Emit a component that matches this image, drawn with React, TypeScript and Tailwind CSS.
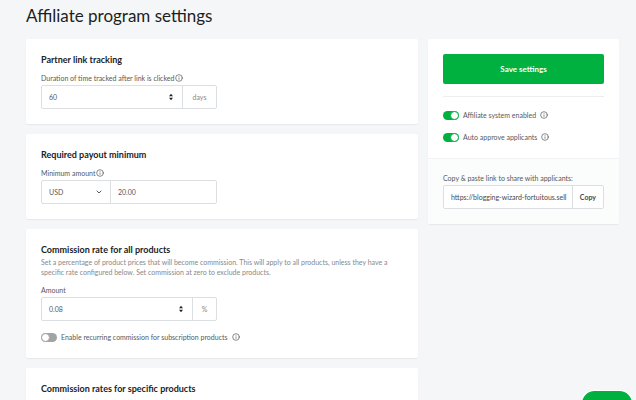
import { useState } from 'react';
import type { ReactNode } from 'react';
import { ChevronDown, Info } from 'lucide-react';

const InfoIcon = () => <Info className="size-2 shrink-0 text-[#4b4f53]" strokeWidth={2} />;

const Card: React.FC<{ title: string; children?: ReactNode }> = ({ title, children }) => (
  <section className="rounded-xs bg-white px-[15px] pt-3.5 pb-[15px] shadow-[0_1px_1px_#e6e9ec]">
    <h2 className="text-[9px] leading-3.5 font-bold text-[#202225]">{title}</h2>
    {children}
  </section>
);

const Toggle: React.FC<{
  id: string;
  label: string;
  checked: boolean;
  onChange: (checked: boolean) => void;
}> = ({ id, label, checked, onChange }) => (
  <div className="flex h-3 items-center">
    <input
      type="checkbox"
      id={id}
      checked={checked}
      onChange={(e) => onChange(e.target.checked)}
      className="relative h-[9px] w-4 shrink-0 cursor-pointer appearance-none rounded-full bg-[#a3a3a3] before:absolute before:top-0 before:left-0 before:size-[9px] before:rounded-full before:border before:border-[#a3a3a3] before:bg-white checked:bg-[#00b140] checked:before:left-[7px] checked:before:border-[#00b140]"
    />
    <label htmlFor={id} className="mr-1 ml-1 text-[7px] leading-3 text-[#55595d]">
      {label}
    </label>
    <InfoIcon />
  </div>
);

const NumberField: React.FC<{
  id: string;
  value: string;
  onChange: (value: string) => void;
  unit: string;
  unitClass: string;
}> = ({ id, value, onChange, unit, unitClass }) => (
  <div className="mt-0.5 flex h-6 w-44 rounded-xs border border-[#dcdfe1] bg-white">
    <div className="relative flex min-w-0 flex-1">
      <input
        type="number"
        id={id}
        value={value}
        onChange={(e) => onChange(e.target.value)}
        className="w-full [appearance:textfield] px-[7px] text-[7px] text-[#55595d] outline-none [&::-webkit-inner-spin-button]:appearance-none"
      />
      <svg
        viewBox="0 0 6 8"
        className="pointer-events-none absolute top-[7px] right-2 h-2 w-1.5"
        fill="#222"
      >
        <path d="M3 .8 5 3.2H1zM3 7.2 1 4.8h4z" />
      </svg>
    </div>
    <span
      className={`flex items-center justify-center border-l border-[#dcdfe1] text-[7px] text-[#85898d] ${unitClass}`}
    >
      {unit}
    </span>
  </div>
);

const App: React.FC = () => {
  const [duration, setDuration] = useState('60');
  const [currency, setCurrency] = useState('USD');
  const [minimum, setMinimum] = useState('20.00');
  const [rate, setRate] = useState('0.08');
  const [recurring, setRecurring] = useState(false);
  const [enabled, setEnabled] = useState(true);
  const [autoApprove, setAutoApprove] = useState(true);
  const shareLink = 'https://blogging-wizard-fortuitous.sell';

  return (
    <div className="h-screen overflow-y-auto bg-[#f5f6f8] pr-[17px] pl-[26px] font-['Lato','Liberation_Sans',sans-serif] [scrollbar-width:none]">
      <h1 className="pt-1 pb-[11px] text-[17px] leading-6 text-[#1d1f21]">Affiliate program settings</h1>
      <div className="flex items-start gap-2.5">
        <main className="flex min-w-0 flex-1 flex-col gap-2.5">
          <Card title="Partner link tracking">
            <div className="mt-1.5 flex items-center gap-px">
              <label htmlFor="duration" className="text-[7px] leading-2.5 text-[#55595d]">
                Duration of time tracked after link is clicked
              </label>
              <InfoIcon />
            </div>
            <NumberField id="duration" value={duration} onChange={setDuration} unit="days" unitClass="w-[34px]" />
          </Card>

          <Card title="Required payout minimum">
            <div className="mt-1.5 flex items-center gap-px">
              <label htmlFor="minimum" className="text-[7px] leading-2.5 text-[#55595d]">
                Minimum amount
              </label>
              <InfoIcon />
            </div>
            <div className="mt-0.5 flex h-6 w-44 rounded-xs border border-[#dcdfe1] bg-white">
              <div className="relative flex w-[69px] border-r border-[#dcdfe1]">
                <select
                  aria-label="Currency"
                  value={currency}
                  onChange={(e) => setCurrency(e.target.value)}
                  className="w-full appearance-none px-[7px] text-[7px] text-[#55595d] outline-none"
                >
                  <option>USD</option>
                </select>
                <ChevronDown
                  className="pointer-events-none absolute top-[7px] right-[7px] size-2 text-[#55595d]"
                  strokeWidth={3}
                />
              </div>
              <input
                id="minimum"
                value={minimum}
                onChange={(e) => setMinimum(e.target.value)}
                className="min-w-0 flex-1 px-[7px] text-[7px] text-[#55595d] outline-none"
              />
            </div>
          </Card>

          <Card title="Commission rate for all products">
            <p className="text-[7px] leading-2.5 text-[#85898d]">
              Set a percentage of product prices that will become commission. This will apply to all products, unless
              they have a specific rate configured below. Set commission at zero to exclude products.
            </p>
            <label htmlFor="rate" className="mt-2 block text-[7px] leading-2.5 text-[#55595d]">
              Amount
            </label>
            <NumberField id="rate" value={rate} onChange={setRate} unit="%" unitClass="w-6" />
            <div className="mt-2.5">
              <Toggle
                id="recurring"
                label="Enable recurring commission for subscription products"
                checked={recurring}
                onChange={setRecurring}
              />
            </div>
          </Card>

          <Card title="Commission rates for specific products" />
        </main>

        <aside className="w-[191px] shrink-0 overflow-hidden rounded-xs bg-white shadow-[0_1px_1px_#e6e9ec]">
          <div className="p-[15px]">
            <button
              type="button"
              className="h-[30px] w-full cursor-pointer rounded-xs bg-[#00b140] text-[8px] font-bold text-white"
            >
              Save settings
            </button>
            <hr className="mt-3 border-[#eceeef]" />
            <div className="mt-3 flex flex-col gap-2.5">
              <Toggle id="enabled" label="Affiliate system enabled" checked={enabled} onChange={setEnabled} />
              <Toggle
                id="auto-approve"
                label="Auto approve applicants"
                checked={autoApprove}
                onChange={setAutoApprove}
              />
            </div>
          </div>
          <div className="border-t border-[#f0f2f3] bg-[#fbfcfc] px-[15px] pt-3.5 pb-[15px]">
            <label htmlFor="share-link" className="block text-[7px] leading-2.5 text-[#55595d]">
              Copy &amp; paste link to share with applicants:
            </label>
            <div className="mt-0.5 flex h-6 rounded-xs border border-[#dcdfe1] bg-white">
              <input
                id="share-link"
                readOnly
                value={shareLink}
                className="min-w-0 flex-1 pr-1 pl-[7px] text-[7px] text-[#44484c] outline-none"
              />
              <button
                type="button"
                className="cursor-pointer border-l border-[#dcdfe1] px-[7px] text-[7px] font-bold text-[#44484c]"
                onClick={() => navigator.clipboard.writeText(shareLink)}
              >
                Copy
              </button>
            </div>
          </div>
        </aside>
      </div>

      <button
        type="button"
        aria-label="Help"
        className="fixed right-1 -bottom-4 h-[25px] w-[50px] cursor-pointer rounded-full bg-[#00b140] ring-1 ring-white"
      />
    </div>
  );
};

export default App;
